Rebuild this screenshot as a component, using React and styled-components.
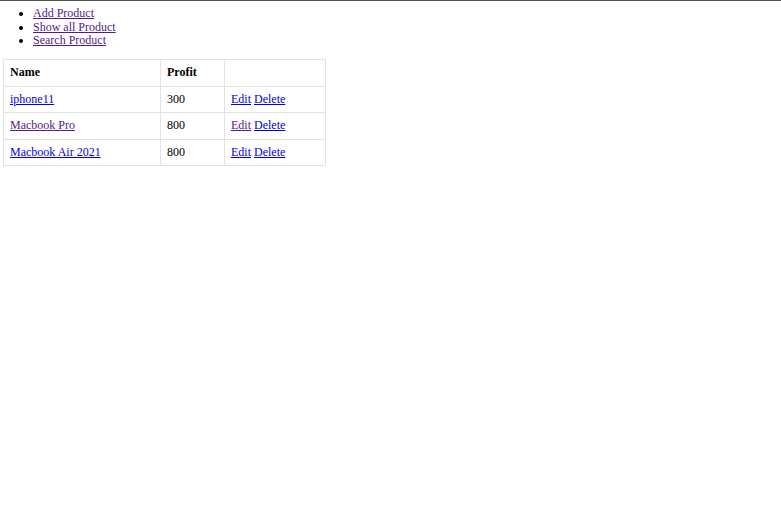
import React from 'react';
import styled, { createGlobalStyle } from 'styled-components'

const Global = createGlobalStyle`
html, body {
  margin: 0;
  padding: 0;
  background: #fff;
}
body {
  border-top: 1px solid #555;
  padding: 0 3px;
  font-family: "Liberation Serif", "Times New Roman", serif;
  font-size: 12px;
  color: #000;
}
`

const Menu = styled.ul`
margin: 6px 0 11px;
padding-left: 30px;
line-height: 13.7px;
`

const Link = styled.a`
color: ${props => props.visited ? '#551a8b' : '#0000ee'};
text-decoration: underline;
cursor: pointer;
`

const Table = styled.table`
border-collapse: collapse;
width: 322px;
table-layout: fixed;
`

const Head = styled.th`
text-align: left;
font-weight: bold;
border: 1px solid #e2e2e2;
padding: 6px 5px 6px 6px;
height: 13.5px;
line-height: 13.5px;
`

const Cell = styled.td`
border: 1px solid #e2e2e2;
padding: 6px 5px 6px 6px;
height: 13.5px;
line-height: 13.5px;
`

const products = [
    { name: 'iphone11', profit: 300, visited: false },
    { name: 'Macbook Pro', profit: 800, visited: true },
    { name: 'Macbook Air 2021', profit: 800, visited: false },
]

const App = () => {
    return (
        <>
        <Global />
        <Menu>
            <li><Link visited>Add Product</Link></li>
            <li><Link visited>Show all Product</Link></li>
            <li><Link visited>Search Product</Link></li>
        </Menu>
        <Table>
            <colgroup>
                <col style={{width: 157}} />
                <col style={{width: 64}} />
                <col style={{width: 101}} />
            </colgroup>
            <thead>
                <tr>
                    <Head>Name</Head>
                    <Head>Profit</Head>
                    <Head></Head>
                </tr>
            </thead>
            <tbody>
                {products.map(p => (
                    <tr key={p.name}>
                        <Cell><Link visited={p.visited}>{p.name}</Link></Cell>
                        <Cell>{p.profit}</Cell>
                        <Cell><Link visited={p.visited}>Edit</Link> <Link>Delete</Link></Cell>
                    </tr>
                ))}
            </tbody>
        </Table>
        </>
    )
}

export default App
